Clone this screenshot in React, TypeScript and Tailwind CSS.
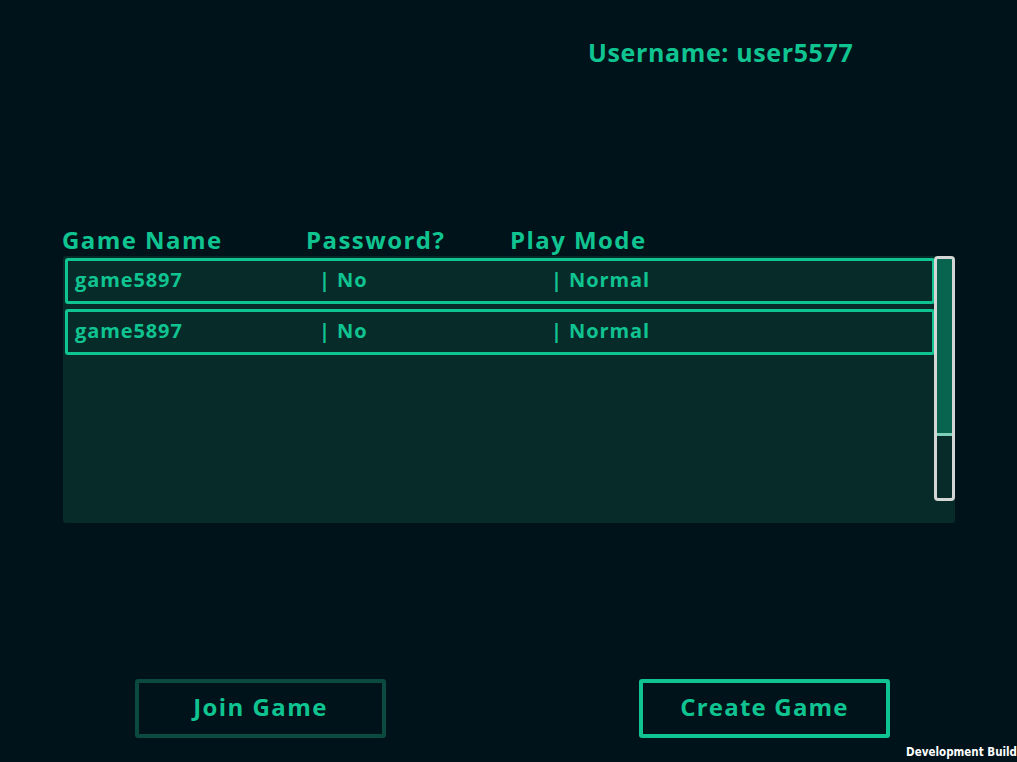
import React from "react";

const font = { fontFamily: "'Open Sans', Lato, sans-serif" };

function Row({ name, pw, mode }: { name: string; pw: string; mode: string }) {
  return (
    <div className="flex h-[46px] w-[870px] items-center rounded-[3px] border-[3px] border-[#10c491] bg-[#072b29] pb-[3px] text-[20px] font-bold tracking-[0.045em] text-[#10c491]">
      <div className="w-[251px] pl-[7px]">{name}</div>
      <div className="w-[232px]">| {pw}</div>
      <div>| {mode}</div>
    </div>
  );
}

export default function App() {
  return (
    <div className="relative flex h-[762px] w-[1017px] flex-col bg-[#01131a]" style={font}>
      <div className="pl-[588px] pt-[36px] text-[25px] font-bold leading-[32px] tracking-[0.025em] text-[#10c491]">
        Username: user5577
      </div>
      <div className="mt-[157px] flex pl-[62px] text-[24px] font-bold leading-[30px] tracking-[0.06em] text-[#10c491]">
        <div className="w-[244px]">Game Name</div>
        <div className="w-[204px]">Password?</div>
        <div>Play Mode</div>
      </div>
      <div className="ml-[63px] mt-[1px] flex h-[267px] w-[892px] rounded-[3px] bg-[#072b29]">
        <div className="flex flex-col gap-[5px] pl-[2px] pt-[2px]">
          <Row name="game5897" pw="No" mode="Normal" />
          <Row name="game5897" pw="No" mode="Normal" />
        </div>
        <div className="ml-[-1px] flex h-[245px] w-[21px] flex-col overflow-hidden rounded-[4px] border-[3px] border-[#d4d6d6] bg-[#072b29]">
          <div className="-mx-[3px] -mt-[3px] h-[180px] rounded-b-[3px] rounded-t-[4px] border-[3px] border-[#7fd0b8] bg-[#08644f]" />
        </div>
      </div>
      <div className="mt-[156px] flex">
        <div className="ml-[135px] flex h-[59px] w-[251px] items-center justify-center rounded-[3px] border-[4px] border-[#0b4a3f] pb-[4px] text-[24px] font-bold tracking-[0.06em] text-[#10c491]">
          Join Game
        </div>
        <div className="ml-[253px] flex h-[59px] w-[251px] items-center justify-center rounded-[3px] border-[4px] border-[#10c491] pb-[4px] text-[24px] font-bold tracking-[0.05em] text-[#10c491]">
          Create Game
        </div>
      </div>
      <div
        className="absolute bottom-[3px] right-0 text-[11.5px] font-bold leading-[14px] text-white"
        style={{ fontFamily: "'DejaVu Sans Condensed', 'DejaVu Sans', sans-serif", fontStretch: "condensed" }}
      >
        Development Build
      </div>
    </div>
  );
}
